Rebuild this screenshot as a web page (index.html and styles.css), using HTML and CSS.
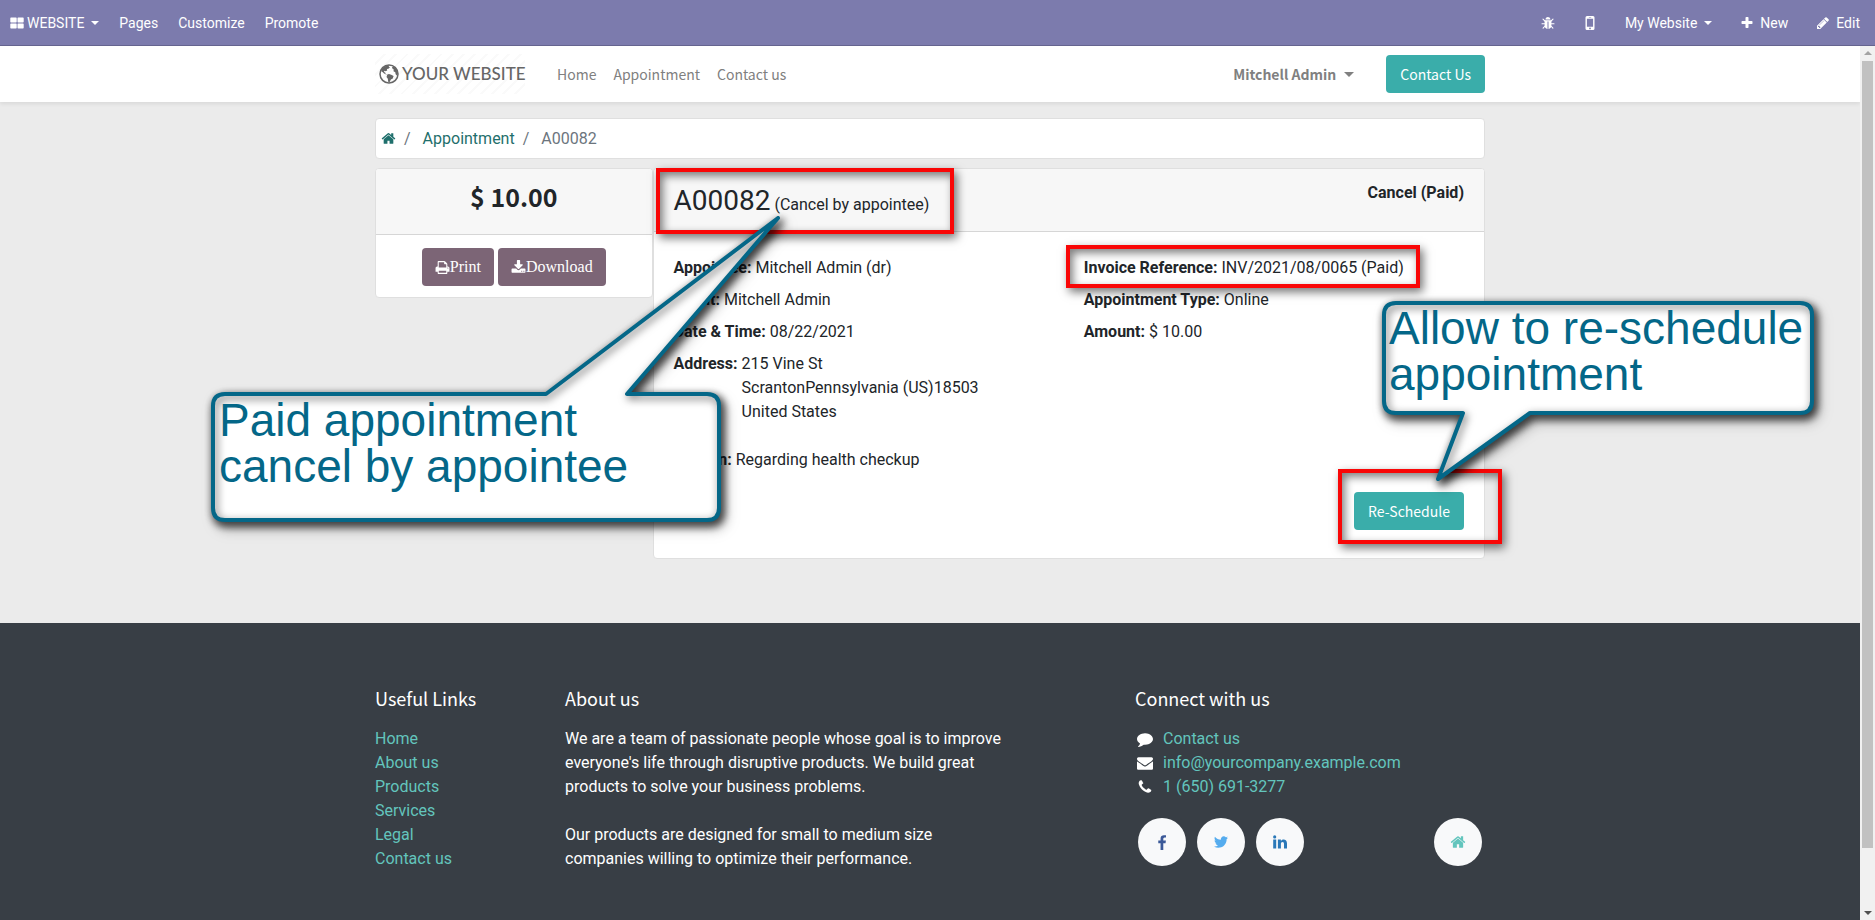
FILE: index.html
```html
<!DOCTYPE html>
<html lang="en">
<head>
<meta charset="utf-8">
<title>A00082 | My Website</title>
<link rel="stylesheet" href="styles.css">
</head>
<body>
<svg class="sprite" aria-hidden="true">
  <symbol id="i-home" viewBox="0 0 1792 1792"><path d="M1472 992v480q0 26-19 45t-45 19h-384v-384h-256v384h-384q-26 0-45-19t-19-45v-480q0-1 .5-3t.5-3l575-474 575 474q1 2 1 6zm223-69l-62 74q-8 9-21 11h-3q-13 0-21-7l-692-577-692 577q-12 8-24 7-13-2-21-11l-62-74q-8-10-7-23.500t11-21.500l719-599q32-26 76-26t76 26l244 204v-195q0-14 9-23t23-9h192q14 0 23 9t9 23v408l219 182q10 8 11 21.500t-7 23.500z"/></symbol>
  <symbol id="i-facebook" viewBox="0 0 1792 1792"><path d="M1343 140v264h-157q-86 0-116 36t-30 108v189h293l-39 296h-254v759h-306v-759h-255v-296h255v-218q0-186 104-288.500t277-102.500q147 0 228 12z"/></symbol>
  <symbol id="i-twitter" viewBox="0 0 1792 1792"><path d="M1684 408q-67 98-162 167 1 14 1 42 0 130-38 259.500t-115.500 248.500-184.500 210.500-258 146-323 54.500q-271 0-496-145 35 4 78 4 225 0 401-138-105-2-188-64.500t-114-159.500q33 5 61 5 43 0 85-11-112-23-185.500-111.500t-73.500-205.500v-4q68 38 146 41-66-44-105-115t-39-154q0-88 44-163 121 149 294.500 238.500t371.500 99.500q-8-38-8-74 0-134 94.500-228.500t228.500-94.500q140 0 236 102 109-21 205-78-37 115-142 178 93-10 186-50z"/></symbol>
  <symbol id="i-linkedin" viewBox="0 0 16 16"><path d="M1.200 5.600h3v9h-3zM2.700 1.300a1.600 1.600 0 1 1 0 3.200 1.600 1.600 0 0 1 0-3.200zM5.900 5.600h3v1.300c.5-.8 1.400-1.500 2.700-1.500 2 0 3.400 1.300 3.400 4.100v5.100h-3V9.900c0-1.200-.4-2-1.500-2s-1.600.9-1.600 1.900v4.800h-3z"/></symbol>
  <symbol id="i-phone" viewBox="0 0 1792 1792"><path d="M1600 1240q0 27-10 70.500t-21 68.500q-21 50-122 106-94 51-186 51-27 0-53-3.500t-57.500-12.500-47-14.500-55.500-20.500-49-18q-98-35-175-83-127-79-264-216t-216-264q-48-77-83-175-3-9-18-49t-20.500-55.500-14.500-47-12.500-57.500-3.500-53q0-92 51-186 56-101 106-122 25-11 68.500-21t70.500-10q14 0 21 3 18 6 53 76 11 19 30 54t35 63.500 31 53.500q3 4 17.500 25t21.500 35.500 7 28.500q0 20-28.500 50t-62 55-62 53-28.500 46q0 9 5 22.500t8.500 20.500 14 24 11.500 19q76 137 174 235t235 174q2 1 19 11.500t24 14 20.500 8.500 22.500 5q18 0 46-28.500t53-62 55-62 50-28.500q14 0 28.500 7t35.500 21.500 25 17.500q25 15 53.500 31t63.500 35 54 30q70 35 76 53 3 7 3 21z"/></symbol>
  <symbol id="i-envelope" viewBox="0 0 1792 1792"><path d="M1792 710v794q0 66-47 113t-113 47h-1472q-66 0-113-47t-47-113v-794q44 49 101 87 362 246 497 345 57 42 92.500 65.500t94.500 48 110 24.500h2q51 0 110-24.500t94.500-48 92.500-65.500q170-123 498-345 57-39 100-87zm0-294q0 79-49 151t-122 123q-376 261-468 325-10 7-42.500 31t-54 38.500-52 32.500-57.500 27-50 9h-2q-23 0-50-9t-57.500-27-52-32.500-54-38.500-42.500-31q-91-64-262-182.500t-205-142.500q-62-42-117-115.500t-55-136.500q0-78 41.500-130t118.500-52h1472q65 0 112.500 47t47.500 113z"/></symbol>
  <symbol id="i-comment" viewBox="0 0 1792 1792"><path d="M1792 896q0 174-120 321.500t-326 233-450 85.500q-70 0-145-8-198 175-460 242-49 14-114 22-17 2-30.500-9t-17.500-29v-1q-3-4-.5-12t2-10 4.500-9.500l6-9 7-8.500 8-9q7-8 31-34.500t34.500-38 31-39.500 32.500-51 27-59 26-76q-157-89-247.500-220t-90.500-281q0-130 71-248.500t191-204.500 286-136.500 348-50.500q244 0 450 85.500t326 233 120 321.500z"/></symbol>
  <symbol id="i-print" viewBox="0 0 1792 1792"><path d="M448 1536h896v-256h-896v256zm0-640h896v-384h-160q-40 0-68-28t-28-68v-160h-640v640zm1152 64q0-26-19-45t-45-19-45 19-19 45 19 45 45 19 45-19 19-45zm128 0v416q0 13-9.500 22.500t-22.500 9.500h-224v160q0 40-28 68t-68 28h-960q-40 0-68-28t-28-68v-160h-224q-13 0-22.500-9.500t-9.500-22.500v-416q0-79 56.500-135.500t135.500-56.500h64v-544q0-40 28-68t68-28h672q40 0 88 20t76 48l152 152q28 28 48 76t20 88v256h64q79 0 135.500 56.500t56.500 135.500z"/></symbol>
  <symbol id="i-download" viewBox="0 0 1792 1792"><path d="M1344 1344q0-26-19-45t-45-19-45 19-19 45 19 45 45 19 45-19 19-45zm256 0q0-26-19-45t-45-19-45 19-19 45 19 45 45 19 45-19 19-45zm128-224v320q0 40-28 68t-68 28h-1472q-40 0-68-28t-28-68v-320q0-40 28-68t68-28h465l135 136q58 56 136 56t136-56l136-136h464q40 0 68 28t28 68zm-325-569q17 41-14 70l-448 448q-18 19-45 19t-45-19l-448-448q-31-29-14-70 17-39 59-39h256v-448q0-26 19-45t45-19h256q26 0 45 19t19 45v448h256q42 0 59 39z"/></symbol>
  <symbol id="i-pencil" viewBox="0 0 1792 1792"><path d="M491 1536l91-91-235-235-91 91v107h128v128h107zm523-928q0-22-22-22-10 0-17 7l-542 542q-7 7-7 17 0 22 22 22 10 0 17-7l542-542q7-7 7-17zm-54-192l416 416-832 832h-416v-416zm683 96q0 53-37 90l-166 166-416-416 166-165q36-38 90-38 53 0 91 38l235 234q37 39 37 91z"/></symbol>
  <symbol id="i-plus" viewBox="0 0 1792 1792"><path d="M1600 736v192q0 40-28 68t-68 28h-416v416q0 40-28 68t-68 28h-192q-40 0-68-28t-28-68v-416h-416q-40 0-68-28t-28-68v-192q0-40 28-68t68-28h416v-416q0-40 28-68t68-28h192q40 0 68 28t28 68v416h416q40 0 68 28t28 68z"/></symbol>
  <symbol id="i-grid" viewBox="0 0 14 14"><path d="M1 1.500h5q.7 0 .7.700v3.600q0 .7-.7.700H1q-.7 0-.7-.7V2.200q0-.7.7-.7zm7.200 0H13q.7 0 .7.700v3.600q0 .7-.7.700H8.200q-.7 0-.7-.7V2.200q0-.7.7-.7zM1 7.500h5q.7 0 .7.700v3.600q0 .7-.7.700H1q-.7 0-.7-.7V8.200q0-.7.7-.7zm7.200 0H13q.7 0 .7.700v3.600q0 .7-.7.700H8.200q-.7 0-.7-.7V8.200q0-.7.7-.7z"/></symbol>
  <symbol id="i-mobile" viewBox="0 0 14 14"><path fill-rule="evenodd" d="M4 0h6q1.500 0 1.500 1.500v11q0 1.500-1.500 1.500H4q-1.500 0-1.500-1.500v-11Q2.500 0 4 0zm-.1 2.800v7.900h6.200V2.800zM5.800 1.200v.5h2.400v-.5zM7 11.500a.9.900 0 1 0 0 1.800.9.900 0 0 0 0-1.800z"/></symbol>
  <symbol id="i-bug" viewBox="0 0 14 14"><path d="M4.500 3.500a2.500 2.500 0 0 1 5 0zM3.600 4.200h6.800v5.300a3.400 3.400 0 0 1-2.900 3.400V5.500h-1v7.400a3.400 3.400 0 0 1-2.900-3.400z"/><path fill="none" stroke="currentColor" stroke-width="1.100" stroke-linecap="round" d="M2 3.200l2 1.900M12 3.200l-2 1.900M1 7.800h2.800M13 7.800h-2.800M2.100 12.200l2-2.200M11.900 12.200l-2-2.200"/></symbol>
  <symbol id="i-globe" viewBox="0 0 20 20"><circle cx="10" cy="10" r="9" fill="none" stroke="currentColor" stroke-width="1.500"/><path d="M2.500 5.500C4 3.200 6.300 1.500 9 1.200l1.400.6-.8 1 1.400.4-1.600 1.500-1.500.3.300 1.500-1.800.8-1-.6-.4 1.300 1.200.5.300 1.200 1.400.6-.8.3-2-1-1.600-1.600-1.300-.7zM8.300 10.500l1.700-.5 2.200.8 2.400 1.300-.8 2.300-1.900 1.200-1.400 2.700-1.200-.3-.5-3.200-1.300-1.900zM13 3l2-.6 2.600 2.800 1.300 4-.8 2.600-1.500-1.500-.3-2-1.800-1 .2-1.800-1.300-.9z"/></symbol>
</svg>

<nav class="topbar">
  <div class="topbar-group">
    <a class="brand" href="#"><svg class="icon14"><use href="#i-grid"/></svg><span>WEBSITE</span><i class="caret"></i></a>
    <a href="#">Pages</a>
    <a href="#">Customize</a>
    <a href="#">Promote</a>
  </div>
  <div class="topbar-group tools">
    <button type="button" aria-label="Debug"><svg class="icon14"><use href="#i-bug"/></svg></button>
    <button type="button" aria-label="Mobile preview"><svg class="icon14"><use href="#i-mobile"/></svg></button>
    <button type="button">My Website<i class="caret"></i></button>
    <button class="labelled" type="button"><svg class="icon14"><use href="#i-plus"/></svg>New</button>
    <button class="labelled" type="button"><svg class="icon14"><use href="#i-pencil"/></svg>Edit</button>
  </div>
</nav>

<div class="viewport">
  <div class="page">
    <header class="site-header">
      <div class="container header-row">
        <a class="logo" href="#"><svg><use href="#i-globe"/></svg><span>YOUR WEBSITE</span></a>
        <nav class="site-nav">
          <a href="#">Home</a>
          <a href="#">Appointment</a>
          <a href="#">Contact us</a>
        </nav>
        <a class="user" href="#">Mitchell Admin<i class="caret"></i></a>
        <a class="btn btn-teal" href="#">Contact Us</a>
      </div>
    </header>

    <main class="main">
      <div class="container canvas">
        <nav class="breadcrumb" aria-label="Breadcrumb">
          <a href="#" aria-label="Home"><svg class="icon15"><use href="#i-home"/></svg></a>
          <span>/</span>
          <a href="#">Appointment</a>
          <span>/</span>
          <span>A00082</span>
        </nav>

        <div class="cards">
          <aside class="card">
            <div class="card-head price"><h2>$ 10.00</h2></div>
            <div class="actions">
              <button class="btn btn-mauve" type="button"><svg class="icon15"><use href="#i-print"/></svg>Print</button>
              <button class="btn btn-mauve" type="button"><svg class="icon15"><use href="#i-download"/></svg>Download</button>
            </div>
          </aside>
          <section class="card">
            <div class="card-head title">
              <h1>A00082 <small>(Cancel by appointee)</small></h1>
              <strong>Cancel (Paid)</strong>
            </div>
            <div class="card-body">
              <div class="columns">
                <div class="fields">
                  <div><strong>Appointee:</strong> Mitchell Admin (dr)</div>
                  <div><strong>Client:</strong> Mitchell Admin</div>
                  <div><strong>Date &amp; Time:</strong> 08/22/2021</div>
                  <div class="address"><strong>Address:</strong><span>215 Vine St<br>ScrantonPennsylvania (US)18503<br>United States</span></div>
                  <div class="reason"><strong>Reason:</strong> Regarding health checkup</div>
                </div>
                <div class="fields">
                  <div><strong>Invoice Reference:</strong> INV/2021/08/0065 (Paid)</div>
                  <div><strong>Appointment Type:</strong> Online</div>
                  <div><strong>Amount:</strong> $ 10.00</div>
                </div>
              </div>
              <button class="btn btn-teal reschedule" type="button">Re-Schedule</button>
            </div>
          </section>
        </div>

        <div class="mark mark-title"></div>
        <div class="mark mark-invoice"></div>
        <div class="mark mark-reschedule"></div>

        <div class="callout callout-paid">
          <svg width="570" height="308"><g class="shape"><path class="fill" d="M15 178H336L568 2L417 178H497Q509 178 509 190V292Q509 304 497 304H15Q3 304 3 292V190Q3 178 15 178Z"/><path class="line" d="M15 178H336L568 2L417 178H497Q509 178 509 190V292Q509 304 497 304H15Q3 304 3 292V190Q3 178 15 178Z"/></g></svg>
          <p>Paid appointment<br>cancel by appointee</p>
        </div>
        <div class="callout callout-allow">
          <svg width="434" height="182"><g class="shape"><path class="fill" d="M14 2H418Q430 2 430 14V100Q430 112 418 112H148L56 178L81 112H14Q2 112 2 100V14Q2 2 14 2Z"/><path class="line" d="M14 2H418Q430 2 430 14V100Q430 112 418 112H148L56 178L81 112H14Q2 112 2 100V14Q2 2 14 2Z"/></g></svg>
          <p>Allow to re-schedule<br>appointment</p>
        </div>
      </div>
    </main>

    <footer class="footer">
      <div class="container footer-grid">
        <section>
          <h5>Useful Links</h5>
          <ul>
            <li><a href="#">Home</a></li>
            <li><a href="#">About us</a></li>
            <li><a href="#">Products</a></li>
            <li><a href="#">Services</a></li>
            <li><a href="#">Legal</a></li>
            <li><a href="#">Contact us</a></li>
          </ul>
        </section>
        <section>
          <h5>About us</h5>
          <p>We are a team of passionate people whose goal is to improve everyone's life through disruptive products. We build great products to solve your business problems.</p>
          <p>Our products are designed for small to medium size<br>companies willing to optimize their performance.</p>
        </section>
        <section class="connect">
          <h5>Connect with us</h5>
          <ul>
            <li><svg class="icon16"><use href="#i-comment"/></svg><a href="#">Contact us</a></li>
            <li><svg class="icon16"><use href="#i-envelope"/></svg><a href="#">info@yourcompany.example.com</a></li>
            <li><svg class="icon16"><use href="#i-phone"/></svg><a href="#">1 (650) 691-3277</a></li>
          </ul>
          <div class="social">
            <a class="facebook" href="#" aria-label="Facebook"><svg class="icon16"><use href="#i-facebook"/></svg></a>
            <a class="twitter" href="#" aria-label="Twitter"><svg class="icon16"><use href="#i-twitter"/></svg></a>
            <a class="linkedin" href="#" aria-label="LinkedIn"><svg class="icon16"><use href="#i-linkedin"/></svg></a>
            <a class="homelink" href="#" aria-label="Home"><svg class="icon16"><use href="#i-home"/></svg></a>
          </div>
        </section>
      </div>
    </footer>
  </div>
  <div class="scrollbar" aria-hidden="true"><i class="arrow up"></i><div class="thumb"></div><i class="arrow down"></i></div>
</div>
</body>
</html>
```

FILE: styles.css
```css
* { box-sizing: border-box; }

body {
  margin: 0;
  height: 100vh;
  display: flex;
  flex-direction: column;
  overflow: hidden;
  font: 16px/24px Roboto, sans-serif;
  color: #212529;
}

a { color: inherit; text-decoration: none; }
button { font: inherit; color: inherit; background: none; border: 0; padding: 0; cursor: pointer; }
h1, h2, h5, p, ul { margin: 0; padding: 0; font-weight: 400; }
ul { list-style: none; }
strong { font-weight: 700; }
svg { fill: currentColor; flex: none; }
.sprite { position: absolute; width: 0; height: 0; }
.icon14 { width: 14px; height: 14px; }
.icon15 { width: 15px; height: 15px; }
.icon16 { width: 16px; height: 16px; }

.caret {
  display: inline-block;
  border: 4px solid transparent;
  border-top-color: currentColor;
  border-bottom: 0;
  margin-left: 7px;
}

/* Editor bar */
.topbar {
  flex: none;
  height: 46px;
  display: flex;
  justify-content: space-between;
  padding: 0 15px 0 10px;
  background: #7c7bad;
  border-bottom: 1px solid #65648f;
  color: #fff;
  font-size: 14px;
}
.topbar-group { display: flex; align-items: center; gap: 20px; }
.topbar-group > * { display: flex; align-items: center; }
.brand span { margin-left: 3px; }
.tools { gap: 28px; }
.labelled { gap: 6px; }

.viewport { flex: 1; display: flex; min-height: 0; }
.page { flex: 1; min-width: 0; overflow: hidden; display: flex; flex-direction: column; background: #ebebeb; }
.container { width: 100%; max-width: 1140px; margin: 0 auto; padding: 0 15px; }

/* Site header */
.site-header { flex: none; background: #fff; box-shadow: 0 2px 4px rgba(0, 0, 0, .08); z-index: 1; }
.header-row {
  display: flex;
  align-items: center;
  height: 56px;
  font-family: "Noto Sans CJK SC", sans-serif;
  font-size: 14px;
  color: #808080;
}
.logo {
  display: flex;
  align-items: center;
  gap: 3px;
  width: 150px;
  height: 40px;
  padding-left: 4px;
  background: repeating-linear-gradient(135deg, #fff 0 6px, #fafafa 6px 8px);
  font: 500 17px/24px Lato, sans-serif;
  color: #666;
  white-space: nowrap;
}
.logo svg { width: 20px; height: 20px; }
.site-nav { display: flex; gap: 17px; margin-left: 32px; }
.user { display: flex; align-items: center; margin-left: auto; margin-right: 32px; font-weight: 700; }
.user .caret { border-width: 5px 5px 0; margin-left: 8px; }

.btn {
  display: inline-flex;
  align-items: center;
  height: 38px;
  border-radius: 4px;
  color: #fff;
}
.btn-teal { padding: 0 14px; background: #3aadaa; font: 14px/24px "Noto Sans CJK SC", sans-serif; }
.btn-mauve { padding: 0 13px; background: #7c6576; font: 16px/24px "Liberation Serif", serif; }

/* Content */
.main { flex: none; padding: 16px 0 64px; }
.canvas { position: relative; }
.breadcrumb {
  display: flex;
  align-items: center;
  height: 41px;
  padding: 0 5px;
  border: 1px solid #dfdfdf;
  border-radius: 4px;
  background: #fff;
  color: #6c757d;
}
.breadcrumb a { display: flex; color: #1f6f6c; }
.breadcrumb span { margin-left: 8px; }
.breadcrumb span + a, .breadcrumb span + span { margin-left: 12px; }

.cards { display: grid; grid-template-columns: 1fr 3fr; align-items: start; margin-top: 9px; }
.card { background: #fff; border: 1px solid #dfdfdf; border-radius: 4px; overflow: hidden; }
.card-head { background: #f7f7f7; border-bottom: 1px solid #d6d6d6; }
.price { height: 66px; padding-top: 10px; text-align: center; }
.price h2 { font: 700 25px/34px "Noto Sans CJK SC", sans-serif; }
.actions { display: flex; justify-content: center; gap: 4px; padding: 13px 0 11px; }
.title { display: flex; justify-content: space-between; align-items: flex-start; height: 63px; padding: 12px 20px; }
.title h1 { font-size: 28px; line-height: 40px; }
.title small { font-size: 16px; margin-left: -3px; }
.card-body { display: flex; flex-direction: column; padding: 24px 20px 28px; }
.columns { display: grid; grid-template-columns: 1fr 1fr; gap: 30px; }
.fields { display: flex; flex-direction: column; gap: 8px; }
.address { display: flex; gap: 4px; }
.reason { margin-top: 16px; }
.reschedule { align-self: flex-end; margin-top: 20px; }

/* Annotations laid over the page */
.mark {
  position: absolute;
  border: 4px solid #f90606;
  box-shadow: 3px 4px 9px rgba(0, 0, 0, .55), inset 3px 4px 9px rgba(0, 0, 0, .5);
}
.mark-title { left: 296px; top: 50px; width: 298px; height: 66px; }
.mark-invoice { left: 706px; top: 127px; width: 354px; height: 43px; }
.mark-reschedule { left: 978px; top: 351px; width: 164px; height: 75px; }
.callout { position: absolute; color: #046788; font: 46px/46px "Liberation Sans", sans-serif; white-space: nowrap; }
.callout svg { display: block; overflow: visible; }
.callout p { position: absolute; }
.callout-paid { left: -150px; top: 98px; }
.callout-paid p { left: 9px; top: 181px; }
.callout-allow { left: 1022px; top: 183px; }
.callout-allow p { left: 7px; top: 4px; }
.shape { filter: drop-shadow(3px 4px 4px rgba(0, 0, 0, .7)); }
.fill { fill: #fff; }
.line { fill: none; stroke: #046788; stroke-width: 4; stroke-linejoin: round; filter: drop-shadow(2px 3px 4px rgba(0, 0, 0, .6)); }

/* Footer */
.footer { flex: 1 0 auto; padding: 63px 0; background: #383e45; color: #fff; }
.footer a { color: #63c5bd; }
.footer-grid { display: grid; grid-template-columns: 160px 445px 350px; column-gap: 30px; }
.footer-grid .connect { margin-left: 95px; width: 350px; }
.footer h5 { font: 18px/24px "Noto Sans CJK SC", sans-serif; margin-bottom: 17px; }
.footer p + p { margin-top: 24px; }
.connect li { display: flex; align-items: center; gap: 10px; padding-left: 2px; }
.social { display: flex; gap: 11px; margin: 19px 3px 0; }
.footer .social a {
  display: grid;
  place-items: center;
  width: 48px;
  height: 48px;
  border-radius: 50%;
  background: #f8f9fa;
}
.footer .social .facebook { color: #3b5998; }
.footer .social .twitter { color: #55acee; }
.footer .social .linkedin { color: #2a78b8; }
.footer .social .homelink { margin-left: auto; }

.scrollbar {
  flex: none;
  width: 15px;
  display: flex;
  flex-direction: column;
  align-items: center;
  justify-content: space-between;
  padding: 5px 0;
  background: #f1f1f1;
}
.thumb { width: 11px; flex: 1; margin: 6px 0 63px; background: #c1c1c1; }
.arrow { border: 4px solid transparent; }
.arrow.up { border-top: 0; border-bottom-color: #a3a3a3; }
.arrow.down { border-bottom: 0; border-top-color: #505050; }
```
